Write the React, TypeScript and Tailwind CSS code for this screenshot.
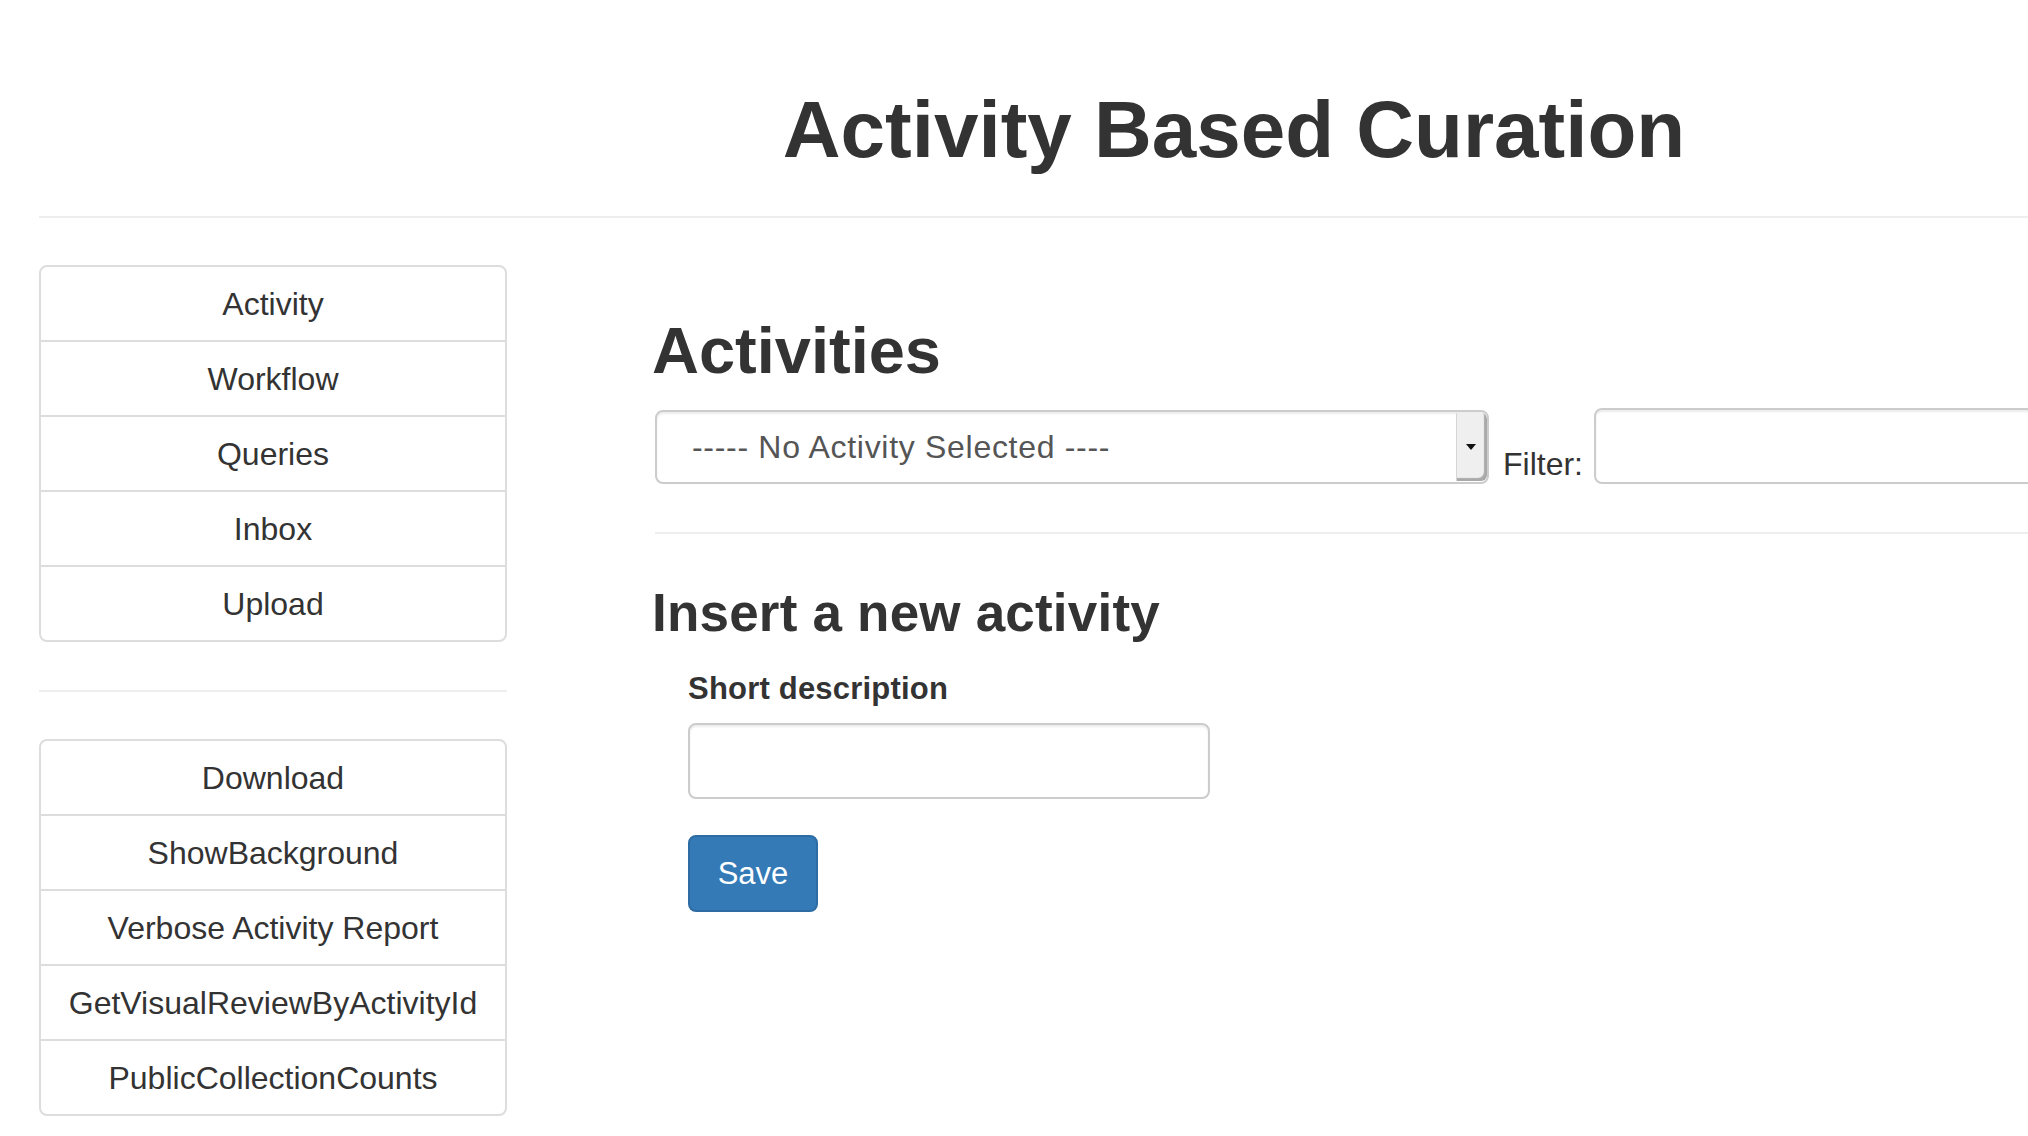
import React from "react";

const groupA = ["Activity", "Workflow", "Queries", "Inbox", "Upload"];
const groupB = [
  "Download",
  "ShowBackground",
  "Verbose Activity Report",
  "GetVisualReviewByActivityId",
  "PublicCollectionCounts",
];

function ListGroup({ items }: { items: string[] }) {
  return (
    <div className="flex flex-col">
      {items.map((it, i) => (
        <div
          key={it}
          className={
            "h-[77px] flex items-center justify-center border-2 border-[#ddd] bg-white text-[32px] leading-[32px] text-[#333] " +
            (i === 0 ? "rounded-t-[8px] " : "-mt-[2px] ") +
            (i === items.length - 1 ? "rounded-b-[8px]" : "")
          }
        >
          {it}
        </div>
      ))}
    </div>
  );
}

export default function App() {
  return (
    <div className="w-[2028px] h-[1136px] overflow-hidden bg-white text-[#333] font-['Liberation_Sans',Arial,sans-serif]">
      <div className="ml-[39px] w-[2390px]">
        <div className="pt-[90px]">
          <h1 className="text-center text-[80px] leading-[80px] font-bold">
            Activity Based Curation
          </h1>
        </div>
        <div className="mt-[46px] h-[2px] bg-[#eee]" />
        <div className="flex items-start mt-[47px]">
          <div className="w-[468px] shrink-0">
            <ListGroup items={groupA} />
            <div className="mt-[48px] h-[2px] bg-[#eee]" />
            <div className="mt-[47px]">
              <ListGroup items={groupB} />
            </div>
          </div>
          <div className="ml-[148px] flex-1 pt-[53px]">
            <h2 className="-ml-[3px] text-[65px] leading-[65px] font-bold">Activities</h2>
            <div className="mt-[25px] flex items-end">
              <div className="w-[834px] h-[74px] flex border-2 border-[#ccc] rounded-[8px] overflow-hidden bg-white shadow-[inset_0_2px_2px_rgba(0,0,0,0.075)]">
                <div className="flex-1 flex items-center pl-[35px] text-[32px] leading-[32px] tracking-[0.7px] text-[#555]">
                  ----- No Activity Selected ----
                </div>
                <div className="w-[31px] my-[1px] bg-[#efefef] border-l border-[#d6d6d6] rounded-r-[6px] shadow-[inset_-3px_-3px_1px_#a9a9a9] flex items-center justify-center pr-[3px]">
                  <svg width="10" height="6" viewBox="0 0 10 6">
                    <polygon points="0,0 10,0 5,6" fill="#111" />
                  </svg>
                </div>
              </div>
              <div className="ml-[14px] pb-[4px] text-[32px] leading-[32px] text-[#333]">
                Filter:
              </div>
              <div className="ml-[11px] flex-1 h-[76px] border-2 border-[#ccc] rounded-[8px] bg-white shadow-[inset_0_2px_2px_rgba(0,0,0,0.075)]" />
            </div>
            <div className="mt-[48px] h-[2px] bg-[#eee]" />
            <h3 className="-ml-[3px] mt-[52px] text-[53px] leading-[53px] font-bold tracking-[0.2px]">
              Insert a new activity
            </h3>
            <div className="pl-[33px]">
              <div className="mt-[34px] text-[31px] leading-[31px] font-bold tracking-[0.2px]">
                Short description
              </div>
              <div className="mt-[19px] w-[522px] h-[76px] border-2 border-[#ccc] rounded-[8px] bg-white shadow-[inset_0_2px_2px_rgba(0,0,0,0.075)]" />
              <button className="mt-[36px] w-[130px] h-[77px] flex items-center justify-center bg-[#337ab7] border-2 border-[#2e6da4] rounded-[8px] text-white text-[31px] leading-[31px]">
                Save
              </button>
            </div>
          </div>
        </div>
      </div>
    </div>
  );
}
